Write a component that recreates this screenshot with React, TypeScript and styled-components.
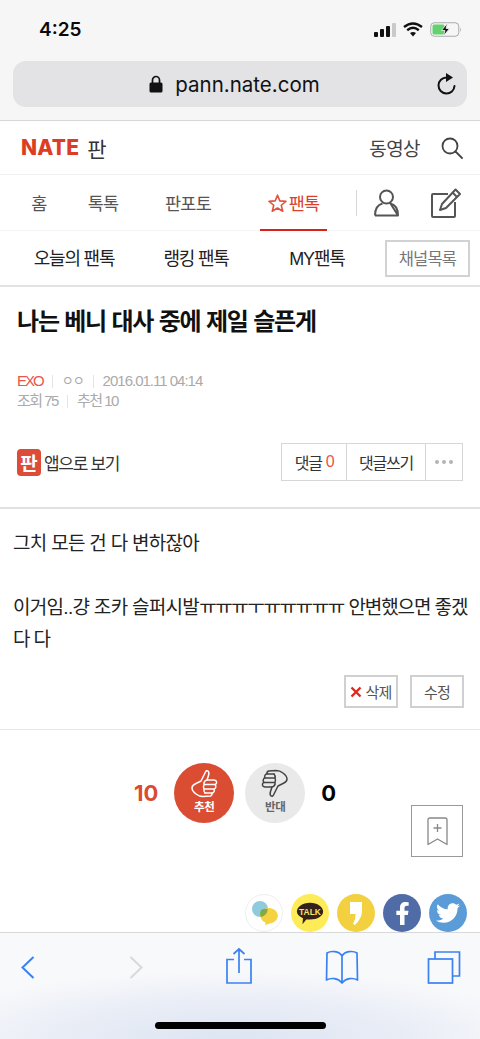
import React from 'react';
import styled, { createGlobalStyle } from 'styled-components';
import { FaFacebookF, FaTwitter } from 'react-icons/fa';

const GlobalStyle = createGlobalStyle`
  html, body {
    margin: 0;
    padding: 0;
    background: #fff;
  }
  * {
    box-sizing: border-box;
  }
  body {
    font-family: "Liberation Sans", "Noto Sans CJK KR", sans-serif;
    -webkit-font-smoothing: antialiased;
  }
`;

const Page = styled.div`
  width: 480px;
  height: 1039px;
  display: flex;
  flex-direction: column;
  overflow: hidden;
`;

const BrowserBar = styled.div`
  height: 121px;
  flex: none;
  background: #f6f6f6;
  border-bottom: 1px solid #d8d8d8;
`;

const StatusBar = styled.div`
  height: 61px;
  padding: 0 18px 0 39px;
  display: flex;
  align-items: center;
  justify-content: space-between;
`;

const Clock = styled.span`
  font-family: Inter, sans-serif;
  font-size: 19px;
  font-weight: 600;
  color: #0a0a0a;
  position: relative;
  top: -1px;
`;

const StatusIcons = styled.div`
  display: flex;
  align-items: center;
  gap: 7px;
  position: relative;
  top: -1px;
`;

const UrlBar = styled.div`
  height: 46px;
  margin: 0 13px;
  padding: 0 11px 0 0;
  border-radius: 13px;
  background: #e3e3e6;
  display: grid;
  grid-template-columns: 1fr auto 1fr;
  align-items: center;
`;

const UrlLabel = styled.div`
  grid-column: 2;
  display: flex;
  align-items: center;
  gap: 12px;
  font-family: Inter, sans-serif;
  font-size: 20.5px;
  color: #111;
`;

const ReloadWrap = styled.div`
  justify-self: end;
  display: flex;
`;

const Content = styled.div`
  flex: 1;
  min-height: 0;
  overflow: hidden;
  position: relative;
`;

const Header = styled.div`
  height: 54px;
  padding: 0 17px 0 21px;
  display: flex;
  align-items: center;
  border-bottom: 1px solid #f1f1f1;
`;

const Logo = styled.span`
  font-family: Inter, sans-serif;
  font-weight: 800;
  font-size: 21px;
  letter-spacing: 0.2px;
  color: #dc3d24;
`;

const LogoPann = styled.span`
  margin-left: 8px;
  font-size: 21px;
  color: #333;
`;

const HeaderRight = styled.div`
  margin-left: auto;
  display: flex;
  align-items: center;
  gap: 21px;
  font-size: 19px;
  letter-spacing: -0.6px;
  color: #444;
`;

const Nav = styled.nav`
  height: 56px;
  display: flex;
  align-items: stretch;
  border-bottom: 1px solid #f4f4f4;
`;

const NavItem = styled.a<{ $w: number; $ml?: number; $active?: boolean }>`
  width: ${(p) => p.$w}px;
  margin-left: ${(p) => p.$ml || 0}px;
  display: flex;
  align-items: center;
  justify-content: center;
  gap: 2px;
  padding-top: 1px;
  font-size: 17.5px;
  letter-spacing: -0.8px;
  color: ${(p) => (p.$active ? '#dc3d2c' : '#555')};
  border-bottom: 2px solid ${(p) => (p.$active ? '#d6231c' : 'transparent')};
  margin-bottom: -1px;
`;

const NavTools = styled.div`
  display: flex;
  align-items: center;
  margin-left: 29px;
`;

const NavDivider = styled.span`
  width: 1px;
  height: 26px;
  background: #d6d6d6;
`;

const ToolIcon = styled.span<{ $ml: number }>`
  display: flex;
  margin-left: ${(p) => p.$ml}px;
`;

const SubNav = styled.div`
  height: 56px;
  padding-right: 10px;
  display: flex;
  align-items: center;
  border-bottom: 2px solid #e2e2e2;
`;

const SubNavItem = styled.a<{ $w: number; $ml: number }>`
  width: ${(p) => p.$w}px;
  margin-left: ${(p) => p.$ml}px;
  white-space: nowrap;
  text-align: center;
  font-size: 18px;
  letter-spacing: -1.2px;
  color: #222;
  position: relative;
  top: -1px;
`;

const ChannelButton = styled.button`
  margin-left: auto;
  width: 85px;
  height: 37px;
  padding: 0;
  background: #fff;
  border: 2px solid #d2d2d2;
  font-family: inherit;
  font-size: 16.5px;
  letter-spacing: -0.8px;
  color: #777;
`;

const ArticleHead = styled.div`
  padding: 17px 17px 26px;
  border-bottom: 2px solid #e0e0e0;
`;

const Title = styled.h1`
  margin: 0;
  font-size: 24px;
  line-height: 36px;
  font-weight: 700;
  letter-spacing: -1.2px;
  color: #111;
`;

const Meta = styled.div`
  margin-top: 31px;
  font-size: 15px;
  line-height: 20px;
  letter-spacing: -1px;
  color: #aaa;
`;

const MetaRow = styled.div<{ $tight?: boolean }>`
  display: flex;
  align-items: center;
  letter-spacing: ${(p) => (p.$tight ? '-1.5px' : '-1px')};
`;

const MetaSep = styled.i`
  width: 1px;
  height: 13px;
  margin: 0 9px;
  background: #e4e4e4;
`;

const Channel = styled.span`
  color: #e8574a;
  letter-spacing: -2px;
`;

const Author = styled.span`
  font-size: 13px;
  letter-spacing: -1px;
`;

const ActionRow = styled.div`
  margin-top: 32px;
  display: flex;
  align-items: center;
  justify-content: space-between;
`;

const AppLink = styled.a`
  display: flex;
  align-items: center;
  gap: 3px;
  font-size: 17px;
  letter-spacing: -1.3px;
  color: #333;
`;

const AppIcon = styled.span`
  width: 24px;
  height: 27px;
  border-radius: 4px;
  background: #dc4c38;
  color: #fff;
  font-size: 19px;
  font-weight: 700;
  letter-spacing: 0;
  display: flex;
  align-items: center;
  justify-content: center;
`;

const ButtonGroup = styled.div`
  display: flex;
  height: 38px;
  border: 1.5px solid #d6d6d6;
`;

const GroupCell = styled.span<{ $w: number }>`
  width: ${(p) => p.$w}px;
  display: flex;
  align-items: center;
  justify-content: center;
  gap: 4px;
  font-size: 16px;
  letter-spacing: -1.2px;
  color: #333;
  & + & {
    border-left: 1.5px solid #d6d6d6;
  }
`;

const CommentCount = styled.em`
  font-style: normal;
  color: #e8574a;
`;

const Dots = styled.span`
  display: flex;
  gap: 3px;
`;

const Dot = styled.i`
  width: 4px;
  height: 4px;
  border-radius: 50%;
  background: #b4b4b4;
`;

const Body = styled.div`
  padding: 19px 8px 21px 13px;
  border-bottom: 1px solid #e6e6e6;
`;

const BodyText = styled.div`
  font-size: 19px;
  line-height: 32px;
  letter-spacing: -0.7px;
  color: #222;
`;

const Jamo = styled.span`
  letter-spacing: -1.4px;
`;

const BodyTail = styled.span`
  letter-spacing: -1.1px;
`;

const EditRow = styled.div`
  margin-top: 19px;
  padding-right: 8px;
  display: flex;
  justify-content: flex-end;
  gap: 12px;
`;

const EditButton = styled.button`
  width: 54px;
  height: 33px;
  padding: 0;
  background: #fff;
  border: 2px solid #d0d0d0;
  display: flex;
  align-items: center;
  justify-content: center;
  gap: 3px;
  font-family: inherit;
  font-size: 15px;
  letter-spacing: -0.8px;
  color: #555;
`;

const VoteRow = styled.div`
  padding-top: 33px;
  display: flex;
  align-items: center;
  justify-content: center;
  padding-right: 10px;
`;

const VoteCount = styled.span<{ $up?: boolean }>`
  font-family: Inter, sans-serif;
  font-size: 22px;
  font-weight: 700;
  color: ${(p) => (p.$up ? '#db4a32' : '#000')};
  margin: ${(p) => (p.$up ? '0 16px 0 0' : '0 0 0 16px')};
`;

const VoteButton = styled.div<{ $up?: boolean }>`
  width: 60px;
  height: 60px;
  border-radius: 50%;
  margin-right: ${(p) => (p.$up ? '11px' : '0')};
  background: ${(p) => (p.$up ? '#db4d33' : '#e9e9e9')};
  color: ${(p) => (p.$up ? '#fff' : '#666')};
  display: flex;
  flex-direction: column;
  align-items: center;
  padding-top: 6px;
  font-size: 11.5px;
  font-weight: 700;
  line-height: 13px;
  letter-spacing: -0.3px;
  svg {
    margin-bottom: 3px;
  }
`;

const BookmarkButton = styled.div`
  position: absolute;
  top: 684px;
  right: 17px;
  width: 52px;
  height: 52px;
  background: #fff;
  border: 1.5px solid #999;
  display: flex;
  align-items: center;
  justify-content: center;
`;

const ShareRow = styled.div`
  margin-top: 71px;
  padding-right: 13px;
  display: flex;
  justify-content: flex-end;
  gap: 8px;
`;

const ShareCircle = styled.span<{ $bg: string; $border?: boolean }>`
  width: 38px;
  height: 38px;
  flex: none;
  border-radius: 50%;
  background: ${(p) => p.$bg};
  border: ${(p) => (p.$border ? '1px solid #eee' : 'none')};
  color: #fff;
  display: flex;
  align-items: center;
  justify-content: center;
`;

const Toolbar = styled.div`
  height: 107px;
  flex: none;
  padding: 14px 0 0 11px;
  border-top: 1px solid #d8d8d8;
  background: radial-gradient(ellipse 320px 70px at 230px 107px, #dde5f3 0%, #e9edf6 55%, rgba(246, 248, 251, 0) 100%), #f8f9fb;
  display: flex;
  align-items: flex-start;
  position: relative;
`;

const ToolbarIcon = styled.svg<{ $ml?: number; $off?: boolean }>`
  width: 34px;
  height: 38px;
  flex: none;
  margin-left: ${(p) => p.$ml || 0}px;
  fill: none;
  stroke: ${(p) => (p.$off ? '#d8d9dc' : '#3b82f0')};
  stroke-width: 1.7;
`;

const HomeIndicator = styled.div`
  position: absolute;
  left: 155px;
  bottom: 10px;
  width: 171px;
  height: 7px;
  border-radius: 4px;
  background: #000;
`;

const Thumb = ({ color, down }: { color: string; down?: boolean }) => (
  <svg
    width="28"
    height="29"
    viewBox="0 0 28 29"
    fill="none"
    stroke={color}
    strokeWidth="1.5"
    strokeLinejoin="round"
    strokeLinecap="round"
    style={down ? { transform: 'rotate(180deg)' } : undefined}
  >
    <path d="M11 12 L15.5 3 Q16.5 1 18 2 Q19.5 3.500 18.500 6.500 L17 11 L24 11 Q27 11.500 26.500 14 Q26 15.500 25 15.500 Q26.500 17 25.500 19 Q25 20 24 20 Q25 22 23.500 23.500 Q23 24 22 24 Q22.500 26 20.500 27 L13 27.500 Q9 27.500 6 25 Q2 22 2 19 Q2 16.500 5 15 Z" />
    <path d="M14.500 15.500 L25 15.500 M14 20 L24 20 M15 24 L22 24" />
    <path d="M17 11 Q13.500 12 14 15.500 Q13 18 14 20 Q13.500 22.500 15 24" />
  </svg>
);

const App = () => {
  return (
    <Page>
      <GlobalStyle />
      <BrowserBar>
        <StatusBar>
          <Clock>4:25</Clock>
          <StatusIcons>
            <svg width="22" height="14" viewBox="0 0 22 14">
              <rect x="0" y="9" width="4" height="5" rx="1" fill="#111" />
              <rect x="6" y="6" width="4" height="8" rx="1" fill="#111" />
              <rect x="12" y="3" width="4" height="11" rx="1" fill="#111" />
              <rect x="18" y="0" width="4" height="14" rx="1" fill="#c9c9c9" />
            </svg>
            <svg width="20" height="15" viewBox="0 0 20 15" fill="none" stroke="#111" strokeWidth="2.4">
              <path d="M1 5 Q10 -2 19 5" />
              <path d="M4.200 8.200 Q10 3.500 15.800 8.200" />
              <path d="M10 14.500 L7 11 Q10 9 13 11 Z" fill="#111" stroke="none" />
            </svg>
            <svg width="32" height="15" viewBox="0 0 32 15">
              <rect x="0.750" y="0.750" width="28" height="13.500" rx="3.500" fill="none" stroke="#aaa" strokeWidth="1" />
              <rect x="2.500" y="2.500" width="12" height="10" rx="1.500" fill="#62d26f" />
              <path d="M30 5 Q31.500 7.500 30 10 Z" fill="#aaa" />
              <path d="M17.500 1 L11.500 8.500 L15 8.500 L13.500 14 L19.500 6.500 L16 6.500 Z" fill="#111" stroke="#f6f6f6" strokeWidth="0.8" />
            </svg>
          </StatusIcons>
        </StatusBar>
        <UrlBar>
          <UrlLabel>
            <svg width="14" height="18" viewBox="0 0 14 18">
              <path d="M3.500 8 V5 a3.500 3.500 0 0 1 7 0 V8" fill="none" stroke="#111" strokeWidth="1.700" />
              <rect x="0.500" y="7.500" width="13" height="10" rx="1.500" fill="#111" />
            </svg>
            pann.nate.com
          </UrlLabel>
          <ReloadWrap>
            <svg width="20" height="23" viewBox="0 0 20 23" fill="none" stroke="#111" strokeWidth="2">
              <path d="M10.500 4.500 A8 8 0 1 0 18.500 13" strokeLinecap="round" />
              <path d="M10 0 L17 4.500 L10 9 Z" fill="#111" stroke="none" />
            </svg>
          </ReloadWrap>
        </UrlBar>
      </BrowserBar>

      <Content>
        <Header>
          <Logo>NATE</Logo>
          <LogoPann>판</LogoPann>
          <HeaderRight>
            동영상
            <svg width="22" height="22" viewBox="0 0 22 22" fill="none" stroke="#444" strokeWidth="1.800">
              <circle cx="9" cy="9" r="7.500" />
              <path d="M14.500 14.500 L21 21" strokeLinecap="round" />
            </svg>
          </HeaderRight>
        </Header>

        <Nav>
          <NavItem $w={78}>홈</NavItem>
          <NavItem $w={50}>톡톡</NavItem>
          <NavItem $w={120}>판포토</NavItem>
          <NavItem $w={67} $ml={12} $active>
            <svg width="19" height="18" viewBox="0 0 24 23" fill="none" stroke="#e3503f" strokeWidth="2" strokeLinejoin="round">
              <path d="M12 1.500 L15 8.800 L22.800 9.400 L16.800 14.400 L18.700 22 L12 17.900 L5.300 22 L7.200 14.400 L1.200 9.400 L9 8.800 Z" />
            </svg>
            팬톡
          </NavItem>
          <NavTools>
            <NavDivider />
            <ToolIcon $ml={17}>
              <svg width="25" height="28" viewBox="0 0 25 28" fill="none" stroke="#555" strokeWidth="2">
                <circle cx="12.500" cy="8" r="6.500" />
                <path d="M1 26.500 Q1 16.500 8.500 14.500 M16.500 14.500 Q24 16.500 24 26.500 Z M1 26.500 L24 26.500" strokeLinejoin="round" />
              </svg>
            </ToolIcon>
            <ToolIcon $ml={32}>
              <svg width="30" height="32" viewBox="0 0 30 30" fill="none" stroke="#555" strokeWidth="2" strokeLinejoin="round">
                <path d="M17 6 L2 6 Q1 6 1 7 L1 28 Q1 29 2 29 L23 29 Q24 29 24 28 L24 14" />
                <path d="M24.500 1.500 L29 6 L15 20 L9 22 L11 16 Z" />
                <path d="M21.500 4.500 L26 9" />
              </svg>
            </ToolIcon>
          </NavTools>
        </Nav>

        <SubNav>
          <SubNavItem $w={84} $ml={32}>오늘의 팬톡</SubNavItem>
          <SubNavItem $w={68} $ml={46}>랭킹 팬톡</SubNavItem>
          <SubNavItem $w={58} $ml={58}>MY팬톡</SubNavItem>
          <ChannelButton>채널목록</ChannelButton>
        </SubNav>

        <ArticleHead>
          <Title>나는 베니 대사 중에 제일 슬픈게</Title>
          <Meta>
            <MetaRow>
              <Channel>EXO</Channel>
              <MetaSep />
              <Author>ㅇㅇ</Author>
              <MetaSep />
              2016.01.11 04:14
            </MetaRow>
            <MetaRow $tight>
              조회 75
              <MetaSep />
              추천 10
            </MetaRow>
          </Meta>
          <ActionRow>
            <AppLink>
              <AppIcon>판</AppIcon>
              앱으로 보기
            </AppLink>
            <ButtonGroup>
              <GroupCell $w={64}>
                댓글 <CommentCount>0</CommentCount>
              </GroupCell>
              <GroupCell $w={79}>댓글쓰기</GroupCell>
              <GroupCell $w={37}>
                <Dots>
                  <Dot />
                  <Dot />
                  <Dot />
                </Dots>
              </GroupCell>
            </ButtonGroup>
          </ActionRow>
        </ArticleHead>

        <Body>
          <BodyText>
            그치 모든 건 다 변하잖아
            <br />
            <br />
            이거임..걍 조카 슬퍼시발<Jamo>ㅠㅠㅠㅜㅠㅠㅠㅠㅠ</Jamo> <BodyTail>안변했으면 좋겠다 다</BodyTail>
          </BodyText>
          <EditRow>
            <EditButton>
              <svg width="12" height="12" viewBox="0 0 12 12" stroke="#e0281e" strokeWidth="2.400">
                <path d="M1.500 1.500 L10.500 10.500 M10.500 1.500 L1.500 10.500" />
              </svg>
              삭제
            </EditButton>
            <EditButton>수정</EditButton>
          </EditRow>
        </Body>

        <VoteRow>
          <VoteCount $up>10</VoteCount>
          <VoteButton $up>
            <Thumb color="#fff" />
            추천
          </VoteButton>
          <VoteButton>
            <Thumb color="#444" down />
            반대
          </VoteButton>
          <VoteCount>0</VoteCount>
        </VoteRow>

        <BookmarkButton>
          <svg width="21" height="29" viewBox="0 0 21 29" fill="none" stroke="#888" strokeWidth="1.300">
            <path d="M1 27.500 L1 3 Q1 1 3 1 L18 1 Q20 1 20 3 L20 27.500 L10.500 22 Z" strokeLinejoin="round" />
            <path d="M10.500 7 L10.500 15 M6.500 11 L14.500 11" />
          </svg>
        </BookmarkButton>

        <ShareRow>
          <ShareCircle $bg="#fff" $border>
            <svg width="28" height="28" viewBox="0 0 28 28">
              <circle cx="10" cy="10" r="8" fill="#8fcbdc" />
              <path d="M18 9 a8.500 7.500 0 0 1 2 15.500 L15 26 L15.500 23.500 A8 7.500 0 0 1 18 9 Z" fill="#f5d23f" />
              <path d="M11.200 11 A7.500 7 0 0 1 17.700 10 A8 8 0 0 1 11 17.900 A7.500 7 0 0 1 11.200 11 Z" fill="#84a942" />
            </svg>
          </ShareCircle>
          <ShareCircle $bg="#fdeb58">
            <svg width="30" height="28" viewBox="0 0 32 28">
              <path d="M16 3 C24 3 30 7.500 30 12.500 C30 17.500 24 21 16 21 L12 21 L8 26 L8.500 19.500 C4.500 18 2 15.500 2 12.500 C2 7.500 8 3 16 3 Z" fill="#35211b" />
              <text x="16" y="15.800" textAnchor="middle" fontFamily="Liberation Sans" fontSize="9" fontWeight="700" fill="#f8e36a">TALK</text>
            </svg>
          </ShareCircle>
          <ShareCircle $bg="#f3d03f">
            <svg width="20" height="28" viewBox="0 0 20 28">
              <path d="M4 3 L16 3 L16 12 Q16 19 9 26 L7 25 Q10 20 9.500 15 L4 15 Z" fill="#fff" />
            </svg>
          </ShareCircle>
          <ShareCircle $bg="#4f6ca6">
            <FaFacebookF size={23} />
          </ShareCircle>
          <ShareCircle $bg="#5b9bd8">
            <FaTwitter size={24} />
          </ShareCircle>
        </ShareRow>
      </Content>

      <Toolbar>
        <ToolbarIcon viewBox="0 0 34 38">
          <path d="M22.500 10 L11.500 20.500 L22.500 31" strokeWidth="2" />
        </ToolbarIcon>
        <ToolbarIcon viewBox="0 0 34 38" $ml={73.5} $off>
          <path d="M11.500 10 L22.500 20.500 L11.500 31" strokeWidth="2" />
        </ToolbarIcon>
        <ToolbarIcon viewBox="0 0 34 38" $ml={69.5}>
          <path d="M12 12.500 L5 12.500 L5 36 L29 36 L29 12.500 L22 12.500" />
          <path d="M17 26 L17 2 M11.500 7 L17 2 L22.500 7" />
        </ToolbarIcon>
        <ToolbarIcon viewBox="0 0 34 38" $ml={69}>
          <path d="M17 9 C14 4 6 3.500 2 6 L1.500 33 C6 30.500 13 31 17 36 C21 31 28 30.500 32.500 33 L32 6 C28 3.500 20 4 17 9 Z M17 9 L17 35" strokeLinejoin="round" />
        </ToolbarIcon>
        <ToolbarIcon viewBox="0 0 34 38" $ml={68}>
          <rect x="1.500" y="12" width="24" height="24" />
          <path d="M8 12 L8 5 L32.500 5 L32.500 29 L25.500 29" />
        </ToolbarIcon>
        <HomeIndicator />
      </Toolbar>
    </Page>
  );
};

export default App;
